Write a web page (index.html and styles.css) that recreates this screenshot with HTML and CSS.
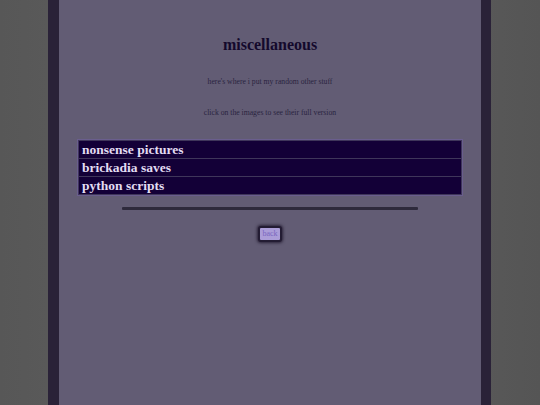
FILE: index.html
```html
<!DOCTYPE html>
<html>
<head>
<meta charset="utf-8">
<title>miscellaneous</title>
<link rel="stylesheet" href="styles.css">
</head>
<body>
<div class="page">
  <h1 class="title">miscellaneous</h1>
  <p class="note first">here's where i put my random other stuff</p>
  <p class="note">click on the images to see their full version</p>
  <div class="list">
    <div class="row">nonsense pictures</div>
    <div class="row">brickadia saves</div>
    <div class="row">python scripts</div>
  </div>
  <div class="rule"></div>
  <div class="back-wrap"><a class="back" href="#">back</a></div>
</div>
</body>
</html>
```
FILE: styles.css
```css
html, body {
  margin: 0;
  padding: 0;
  height: 100%;
}
body {
  background: linear-gradient(to right, #575757 0%, #606060 40%, #606060 60%, #555555 100%);
  font-family: "Liberation Serif", "Times New Roman", serif;
  overflow: hidden;
}
.page {
  box-sizing: border-box;
  margin-left: 48px;
  width: 443px;
  height: 405px;
  background: #625c74;
  border-left: 11px solid #2a2238;
  border-right: 10px solid #2a2238;
  padding-top: 36px;
  display: flex;
  flex-direction: column;
  align-items: center;
}
.title {
  margin: 0;
  font-size: 16px;
  line-height: 18px;
  font-weight: bold;
  color: #14092c;
}
.note {
  margin: 0;
  font-size: 7.7px;
  line-height: 10px;
  color: #2a2440;
}
.note.first {
  margin-top: 23px;
}
.note + .note {
  margin-top: 21px;
}
.list {
  margin-top: 21px;
  width: 386px;
  box-sizing: border-box;
  border: 1px solid #6a5e8e;
  padding: 1px;
  background: #3f365a;
  display: flex;
  flex-direction: column;
  gap: 1px;
}
.row {
  background: #130037;
  color: #e2dcf2;
  font-weight: bold;
  font-size: 13.5px;
  line-height: 17px;
  padding-left: 3px;
}
.rule {
  margin-top: 11px;
  width: 296px;
  height: 3px;
  background: #2e2a3c;
  border-radius: 1px;
}
.back-wrap {
  margin-top: 16px;
}
.back {
  display: block;
  font-size: 8px;
  line-height: 12px;
  padding: 0 2px;
  background: #ab9dd8;
  color: #7a66c0;
  text-decoration: none;
  border: 2px solid #231c33;
  border-radius: 3px;
  box-shadow: 0 0 3px 1px #2a2238;
}
```
